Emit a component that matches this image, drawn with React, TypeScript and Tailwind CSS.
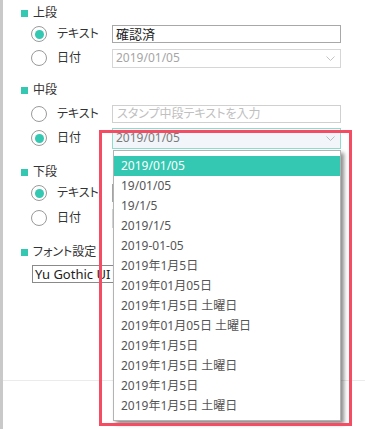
import React from 'react';

const TEAL = 'bg-[#34c7b1]';

function Radio({ checked }: { checked?: boolean }) {
  return (
    <div className="flex h-4 w-4 shrink-0 items-center justify-center rounded-full border border-[#9a9a9a] bg-white">
      {checked && <div className={`h-[9px] w-[9px] rounded-full ${TEAL}`} />}
    </div>
  );
}

function Header({ label, className = '' }: { label: string; className?: string }) {
  return (
    <div className={`flex h-4 items-center gap-[5px] ${className}`}>
      <div className={`h-[7px] w-[7px] ${TEAL}`} />
      <span className="text-[12px] leading-none text-[#333]">{label}</span>
    </div>
  );
}

function Row({
  label,
  checked,
  className = '',
  children,
}: {
  label: string;
  checked?: boolean;
  className?: string;
  children?: React.ReactNode;
}) {
  return (
    <div className={`flex h-5 items-center pl-[10px] ${className}`}>
      <Radio checked={checked} />
      <span className="ml-[10px] w-[55px] shrink-0 text-[12px] leading-none text-[#333]">{label}</span>
      <div className="flex-1">{children}</div>
    </div>
  );
}

function Chevron({ color = '#b5b5b5' }: { color?: string }) {
  return (
    <svg width="9" height="5" viewBox="0 0 9 5" fill="none">
      <path d="M0.5 0.5 L4.5 4.5 L8.5 0.5" stroke={color} strokeWidth="1" />
    </svg>
  );
}

const formats = [
  '2019/01/05',
  '19/01/05',
  '19/1/5',
  '2019/1/5',
  '2019-01-05',
  '2019年1月5日',
  '2019年01月05日',
  '2019年1月5日 土曜日',
  '2019年01月05日 土曜日',
  '2019年1月5日',
  '2019年1月5日 土曜日',
  '2019年1月5日',
  '2019年1月5日 土曜日',
];

export default function App() {
  return (
    <div
      className="relative flex h-[429px] w-[365px] overflow-hidden bg-white [font-feature-settings:'palt']"
      style={{ fontFamily: '"Noto Sans", "Noto Sans CJK JP", sans-serif' }}
    >
      {/* left edge */}
      <div className="w-[3px] shrink-0 bg-[#c9c9c9]" />

      <div className="flex flex-1 flex-col">
        <div className="flex flex-col pl-[18px] pr-6 pt-[5px]">
          {/* 上段 */}
          <Header label="上段" />
          <Row label="テキスト" checked className="mt-[3px]">
            <div className="flex h-[18px] items-center border border-[#a8a8a8] px-[3px] text-[13px] leading-none text-[#222]">
              確認済
            </div>
          </Row>
          <Row label="日付" className="mt-1">
            <div className="flex h-[19px] items-center justify-between border border-[#d6d6d6] pl-[3px] pr-[5px] text-[12px] leading-none text-[#a5a5a5]">
              <span>2019/01/05</span>
              <Chevron color="#c4c4c4" />
            </div>
          </Row>

          {/* 中段 */}
          <Header label="中段" className="mt-[14px]" />
          <Row label="テキスト" className="mt-[6px]">
            <div className="flex h-[18px] items-center border border-[#d0d0d0] px-[4px] text-[12px] leading-none text-[#c0c0c0]">
              スタンプ中段テキストを入力
            </div>
          </Row>
          <Row label="日付" checked className="mt-1">
            <div className="relative">
              <div className="flex h-[21px] items-center justify-between border border-[#8fdccf] bg-[#f2f5f9] pl-[3px] pr-[5px] text-[12px] leading-none text-[#7a7a7a]">
                <span>2019/01/05</span>
                <Chevron color="#b8bcc4" />
              </div>

              {/* open list */}
              <div className="absolute left-[1px] right-0 top-full z-10 mt-[1px] border border-[#b3b3b3] bg-white pb-1 pt-[5px] shadow-[3px_3px_4px_rgba(0,0,0,0.45)]">
                {formats.map((f, i) => (
                  <div
                    key={i}
                    className={`flex h-5 items-center pl-[7px] text-[12px] leading-none ${
                      i === 0 ? `${TEAL} text-white` : 'text-[#555]'
                    }`}
                  >
                    {f}
                  </div>
                ))}
              </div>
            </div>
          </Row>

          {/* 下段 */}
          <Header label="下段" className="mt-4" />
          <Row label="テキスト" checked className="mt-[3px]">
            <div className="h-[18px] border border-[#a8a8a8]" />
          </Row>
          <Row label="日付" className="mt-[5px]">
            <div className="h-[19px] border border-[#d6d6d6]" />
          </Row>

          {/* フォント設定 */}
          <Header label="フォント設定" className="mt-4" />
          <div className="ml-[11px] mt-[5px] flex h-[18px] items-center border border-[#8a8a8a] px-[2px] text-[13px] leading-none text-[#222]">
            Yu Gothic UI
          </div>
        </div>

        <div className="mt-auto mb-[48px] h-px bg-[#ebebeb]" />
      </div>

      {/* annotation frame */}
      <div className="pointer-events-none absolute left-[99px] top-[130px] z-20 h-[296px] w-[253px] border-[3px] border-[#f34c63]" />
    </div>
  );
}
